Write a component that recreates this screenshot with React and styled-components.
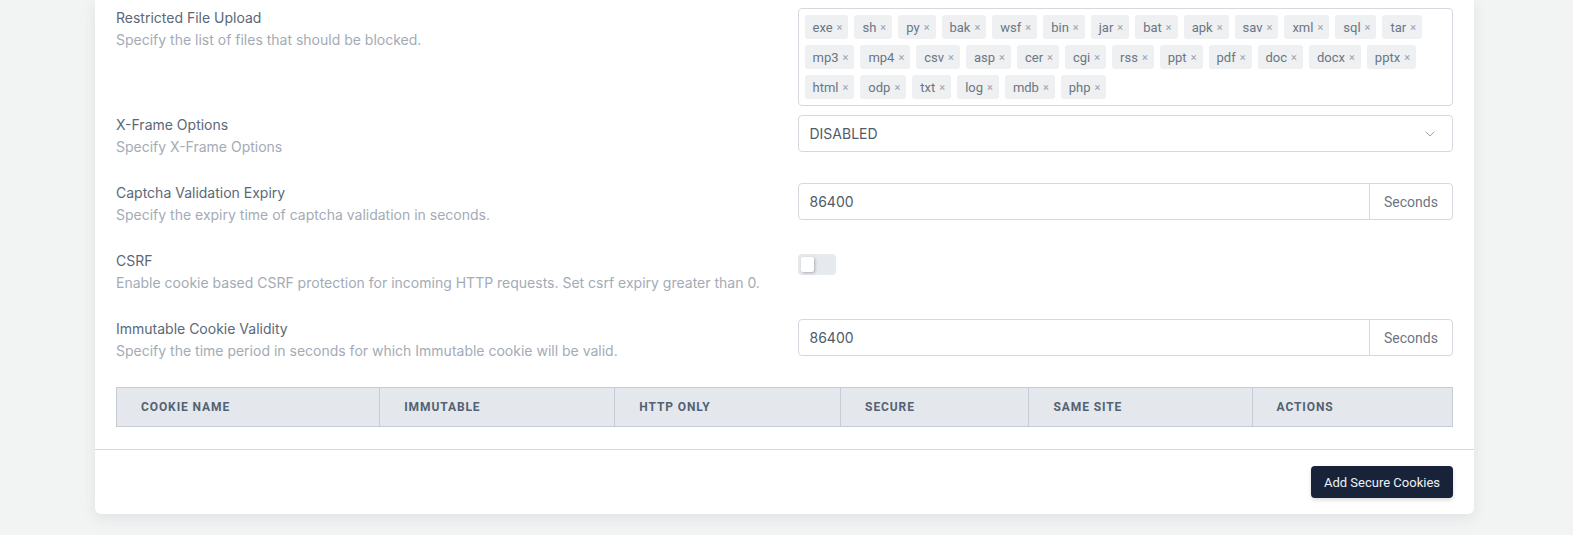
import React from 'react';
import styled, { createGlobalStyle } from 'styled-components';
import { ChevronDown } from 'lucide-react';

const GlobalStyle = createGlobalStyle`
  body {
    margin: 0;
    background: #f2f4f4;
    font-family: Roboto, "Noto Sans", sans-serif;
  }
`;

const blockedFiles = [
  'exe', 'sh', 'py', 'bak', 'wsf', 'bin', 'jar', 'bat', 'apk', 'sav', 'xml', 'sql', 'tar',
  'mp3', 'mp4', 'csv', 'asp', 'cer', 'cgi', 'rss', 'ppt', 'pdf', 'doc', 'docx', 'pptx',
  'html', 'odp', 'txt', 'log', 'mdb', 'php',
];

const columns = [
  { name: 'Cookie Name', width: '19.7%' },
  { name: 'Immutable', width: '17.6%' },
  { name: 'Http Only', width: '16.9%' },
  { name: 'Secure', width: '14.1%' },
  { name: 'Same Site', width: '16.7%' },
  { name: 'Actions', width: '15%' },
];

const Page = styled.div`
  padding: 0 99px 22px 95px;
`;

const Card = styled.div`
  background: #fff;
  border-radius: 0 0 6px 6px;
  box-shadow: 0 4px 14px rgba(30, 40, 50, 0.09);
`;

const Body = styled.div`
  padding: 8px 21px 22px 21px;
`;

const Row = styled.div`
  display: grid;
  grid-template-columns: 1fr 1fr;
  column-gap: 26px;
  margin-bottom: 9px;
`;

const Info = styled.div`
  padding-bottom: 17px;
  font-family: Inter, Roboto, sans-serif;
`;

const Label = styled.div`
  font-size: 14px;
  line-height: 20px;
  color: #5b6878;
`;

const Desc = styled.div`
  margin-top: 2px;
  font-size: 14px;
  line-height: 20px;
  color: #a4abb6;
`;

const TagBox = styled.div`
  display: flex;
  flex-wrap: wrap;
  align-content: flex-start;
  gap: 6px;
  padding: 6px;
  border: 1px solid #d5d9df;
  border-radius: 4px;
  height: 98px;
  box-sizing: border-box;
`;

const Tag = styled.span`
  display: inline-flex;
  align-items: center;
  height: 24px;
  padding: 0 6px 0 8px;
  background: #eef0f2;
  border-radius: 3px;
  font-size: 13px;
  color: #6b7684;
`;

const TagX = styled.span`
  margin-left: 4px;
  font-size: 11px;
  color: #9aa2ad;
`;

const Field = styled.div`
  display: flex;
  align-items: center;
  height: 37px;
  box-sizing: border-box;
  border: 1px solid #d5d9df;
  border-radius: 4px;
  font-family: Inter, Roboto, sans-serif;
  font-size: 14px;
  color: #4f5b6a;
`;

const Value = styled.div`
  flex: 1;
  padding: 0 11px;
`;

const Chevron = styled.div`
  display: flex;
  padding-right: 14px;
  color: #9aa2ad;
`;

const Addon = styled.div`
  align-self: stretch;
  display: flex;
  align-items: center;
  justify-content: center;
  width: 82px;
  border-left: 1px solid #d5d9df;
  font-family: Roboto, sans-serif;
  color: #6b7684;
`;

const Track = styled.div`
  display: flex;
  align-items: center;
  width: 38px;
  height: 21px;
  margin-top: 3px;
  padding: 0 3px;
  box-sizing: border-box;
  background: #e6e9ed;
  border-radius: 4px;
`;

const Knob = styled.div`
  width: 13px;
  height: 15px;
  background: #fff;
  border-radius: 2px;
  box-shadow: 1px 1px 3px rgba(0, 0, 0, 0.25);
`;

const Table = styled.table`
  width: 100%;
  border-collapse: collapse;
  table-layout: fixed;
`;

const Th = styled.th`
  width: ${p => p.$w};
  height: 39px;
  padding: 0 0 0 24px;
  box-sizing: border-box;
  text-align: left;
  background: #e4e8ed;
  border: 1px solid #c5ccd5;
  font-size: 12px;
  font-weight: 700;
  letter-spacing: 0.9px;
  text-transform: uppercase;
  color: #536273;
`;

const Footer = styled.div`
  display: flex;
  justify-content: flex-end;
  padding: 16px 21px;
  border-top: 1px solid #d5d9df;
`;

const Button = styled.button`
  height: 32px;
  padding: 0 13px;
  border: none;
  border-radius: 4px;
  background: #18233a;
  color: #eef1f5;
  font-family: inherit;
  font-size: 13px;
  box-shadow: 0 2px 4px rgba(0, 0, 0, 0.15);
  cursor: pointer;
`;

const Setting = ({ label, desc, children }) => (
  <Row>
    <Info>
      <Label>{label}</Label>
      <Desc>{desc}</Desc>
    </Info>
    <div>{children}</div>
  </Row>
);

export default function App() {
  return (
    <Page>
      <GlobalStyle />
      <Card>
        <Body>
          <Setting label="Restricted File Upload" desc="Specify the list of files that should be blocked.">
            <TagBox>
              {blockedFiles.map(f => (
                <Tag key={f}>{f}<TagX>×</TagX></Tag>
              ))}
            </TagBox>
          </Setting>
          <Setting label="X-Frame Options" desc="Specify X-Frame Options">
            <Field>
              <Value>DISABLED</Value>
              <Chevron><ChevronDown size={16} strokeWidth={1.5} /></Chevron>
            </Field>
          </Setting>
          <Setting label="Captcha Validation Expiry" desc="Specify the expiry time of captcha validation in seconds.">
            <Field>
              <Value>86400</Value>
              <Addon>Seconds</Addon>
            </Field>
          </Setting>
          <Setting label="CSRF" desc="Enable cookie based CSRF protection for incoming HTTP requests. Set csrf expiry greater than 0.">
            <Track><Knob /></Track>
          </Setting>
          <Setting label="Immutable Cookie Validity" desc="Specify the time period in seconds for which Immutable cookie will be valid.">
            <Field>
              <Value>86400</Value>
              <Addon>Seconds</Addon>
            </Field>
          </Setting>
          <Table>
            <thead>
              <tr>
                {columns.map(c => <Th key={c.name} $w={c.width}>{c.name}</Th>)}
              </tr>
            </thead>
          </Table>
        </Body>
        <Footer>
          <Button>Add Secure Cookies</Button>
        </Footer>
      </Card>
    </Page>
  );
}
